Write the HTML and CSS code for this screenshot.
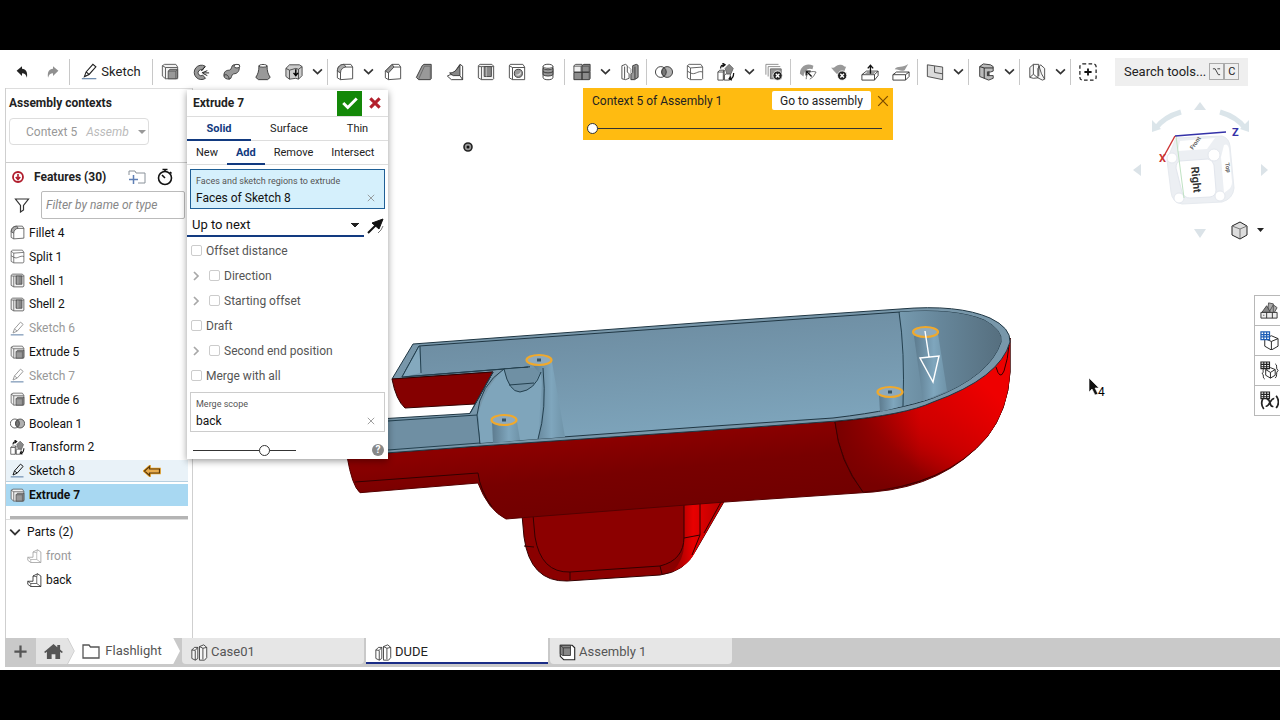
FILE: index.html
```html
<!DOCTYPE html>
<html lang="en">
<head>
<meta charset="utf-8">
<title>DUDE - Flashlight</title>
<link rel="stylesheet" href="styles.css">
</head>
<body>
<svg class="defs" aria-hidden="true">
  <defs>
    <symbol id="i-undo" viewBox="0 0 20 20"><path d="M4 8.500 10 3.500v3c4.500.3 6.500 4 5.500 10-1-3.500-2.500-5-5.500-5v3z" fill="#222"/></symbol>
    <symbol id="i-redo" viewBox="0 0 20 20"><path d="M16 8.500 10 3.500v3c-4.500.3-6.500 4-5.500 10 1-3.500 2.500-5 5.500-5v3z" fill="#909090"/></symbol>
    <symbol id="i-pencil" viewBox="0 0 20 20"><path d="M4 16 6 10.500 14 1.500l3.500 3-8 9zM6 10.500l3.500 3" fill="none" stroke="currentColor" stroke-width="1.300"/><path d="M1 18.500h17" stroke="#4a6f9a" stroke-width="1.200"/></symbol>
    <symbol id="i-extrude" viewBox="0 0 20 20"><path d="M1.500 3 4 1.500h12.500l2 3V17.500H5l-3.500-3z" fill="#f2f2f2" stroke="#555"/><path d="M5 17.500V5h13.500M1.500 3 5 5" fill="none" stroke="#555"/><path d="M8 9l2-2h8.500v9L17 17.500H8z" fill="#999" stroke="#444" stroke-width=".9"/><path d="M8 9h8.500v8.500M16.500 9l2-2" stroke="#555" fill="none" stroke-width=".9"/></symbol>
    <symbol id="i-revolve" viewBox="0 0 20 20"><path d="M14.500 3.500A8 8 0 1 0 15 17l-3-3.500a3.300 3.300 0 1 1-.3-5.500z" fill="#999" stroke="#333"/><path d="M15 4 10 8.500M11 11l6-2.500M12 11h7M12 11.500l5 2.500" stroke="#222" stroke-width="1.100"/></symbol>
    <symbol id="i-sweep" viewBox="0 0 20 20"><path d="M1 14c0-5 3-6 6-6s2-6 5-6h6c1 7-2 10-6 10-3 0-2 6-5 6s-6-1-6-4z" fill="#999" stroke="#333"/><ellipse cx="15.500" cy="3.500" rx="3.200" ry="2" fill="#fff" stroke="#333"/><path d="M1 14c2-2 5-1 6 4" fill="none" stroke="#333"/></symbol>
    <symbol id="i-loft" viewBox="0 0 20 20"><path d="M5.500 3h9c0 6 1 9 3.500 13l-3 2.500H5L2 16c2.500-4 3.500-7 3.500-13z" fill="#999" stroke="#333"/><path d="M5.500 3.500c0-2.500 9-2.500 9 0-1 1.500-8 1.500-9 0z" fill="#fff" stroke="#333"/></symbol>
    <symbol id="i-thicken" viewBox="0 0 20 20"><path d="M1 6l4-4h11l3 2v10l-4 4-3-1-7 1-4-3z" fill="#ccc" stroke="#444"/><path d="M1 6l4 2 7-2 3 1V18M15 7l4-3M5 8v10" stroke="#444" fill="none"/><path d="M12 7v7M9.500 11l2.500 3 2.500-3" stroke="#000" stroke-width="1.600" fill="none"/></symbol>
    <symbol id="i-fillet" viewBox="0 0 20 20"><path d="M1.500 9C1.500 4 5 1.500 9 1.500h7.500l2 3v13l-13.500 1-3.500-2z" fill="#fff" stroke="#444"/><path d="M1.500 9C1.500 4 5 1.500 9 1.500l2 3C8 4.500 5 7 5 11z" fill="#aaa" stroke="#444"/><path d="M11 4.500h7.500M5 11v7.500" stroke="#444"/></symbol>
    <symbol id="i-chamfer" viewBox="0 0 20 20"><path d="M1.500 9 9 1.500h7.500l2 3v13l-13.500 1-3.500-2z" fill="#fff" stroke="#444"/><path d="M1.500 9 9 1.500l2 3L5 11z" fill="#999" stroke="#444"/><path d="M11 4.500h7.500M5 11v7.500" stroke="#444"/></symbol>
    <symbol id="i-draft" viewBox="0 0 20 20"><path d="M1.500 16 8 3l2-1.500h8v16l-1 1H4z" fill="#999" stroke="#333"/><path d="M4 18 10.500 3.500H17V18" fill="none" stroke="#666"/></symbol>
    <symbol id="i-rib" viewBox="0 0 20 20"><path d="M15.500 1.500l3 2v15H6l-4.500-4 3-1.500h3z" fill="#fff" stroke="#333"/><path d="M15.500 2v12H8l-4-3c5 0 8-3 11.500-9z" fill="#888" stroke="#333"/><path d="M15.500 14l3 4.500" stroke="#333"/></symbol>
    <symbol id="i-shell" viewBox="0 0 20 20"><path d="M1.500 3l2-1.500h13l2 2v14l-1 1H5l-3.500-2z" fill="#f2f2f2" stroke="#444"/><path d="M5 18.500V4H2M5 4h13.500" stroke="#555" fill="none"/><path d="M8 4h8v11H8z" fill="#888" stroke="#444"/><path d="M10.500 4.500V15" stroke="#bbb"/></symbol>
    <symbol id="i-hole" viewBox="0 0 20 20"><path d="M1.500 3l1-1.500h14l2 3v14H5l-3.500-2z" fill="#fff" stroke="#444"/><path d="M5 18.500V5h13.500M1.500 3 5 5" stroke="#444" fill="none"/><circle cx="11.500" cy="11.500" r="4.500" fill="#999" stroke="#333"/><path d="M8.500 13c3 0 5-1 6-4 1 4-3 7-6 4z" fill="#ddd"/></symbol>
    <symbol id="i-thread" viewBox="0 0 20 20"><path d="M4.500 4c0-3.500 11-3.500 11 0v12c0 3.500-11 3.500-11 0z" fill="#fff" stroke="#333"/><path d="M4.500 6c2 2 9 2 11 0v7c-2 2-9 2-11 0z" fill="#999" stroke="#333"/><path d="M4.500 4c0 2.500 11 2.500 11 0M4.500 9.500c2 2 9 2 11 0" fill="none" stroke="#333"/></symbol>
    <symbol id="i-pattern" viewBox="0 0 20 20"><path d="M1 3l2-1.500h7V10H1z" fill="#eee" stroke="#444"/><path d="M10 3l2-1.500h7V9l-1 1h-8zM1 10.500h9v8H1zM10 10.500h8l1-1v8l-1 1h-8z" fill="#8c8c8c" stroke="#333"/><path d="M1 3.500h8V10M10 3.500h8V10M18 10.500v8" stroke="#555" fill="none"/></symbol>
    <symbol id="i-mirror" viewBox="0 0 20 20"><path d="M1 3l4-1.500 2 1.500v7l2 2v5l-4 1.500-4-1zM4 4v13.500" fill="#fff" stroke="#444"/><path d="M13 3l4-1.500 2 1V16l-4 2.500h-4v-6l2-2z" fill="#999" stroke="#333"/><path d="M8 4l3 3v5" fill="none" stroke="#888"/><path d="M15.500 4v14" stroke="#333"/></symbol>
    <symbol id="i-boolean" viewBox="0 0 20 20"><circle cx="6.500" cy="10" r="6" fill="#fff" stroke="#333"/><circle cx="13.500" cy="10" r="6" fill="#b0b0b0" stroke="#333"/><path d="M10 5.100a6 6 0 0 1 0 9.800 6 6 0 0 1 0-9.800z" fill="#777" stroke="#333"/></symbol>
    <symbol id="i-split" viewBox="0 0 20 20"><path d="M1.500 3l2-1.500h13l2 3v13l-1 1H5l-3.500-2z" fill="#fff" stroke="#555"/><path d="M1.500 3 5 5.500l13.500-1M5 5.500v13M1.500 9 5 11c5 3 8-3 13.500-1" fill="none" stroke="#555"/></symbol>
    <symbol id="i-transform" viewBox="0 0 20 20"><path d="M1 10l2-2h5v10l-1 1H1zM1 10h6v9M7 10l1-2M8 14l2-2h5l-1 7H8z" fill="#fff" stroke="#444"/><path d="M9 6l4.500-4.500L18 6l-2.500 6H11z" fill="#888" stroke="#666"/><path d="M4 6c0-3 1-4 4-4M6 0l3 2-3 2.500M18.500 11c0 4-1 6-4 7M16.500 19l-3-1.500 2-2.500" fill="none" stroke="#111" stroke-width="1.400"/></symbol>
    <symbol id="i-delpart" viewBox="0 0 20 20"><path d="M1 13V1.500h14M3.500 15V4H17" fill="none" stroke="#888"/><path d="M6 6.500h12v11H6z" fill="#999" stroke="#666"/><circle cx="14" cy="14" r="5.200" fill="#222" stroke="#fff"/><path d="m12 12 4 4m0-4-4 4" stroke="#fff" stroke-width="1.500"/></symbol>
    <symbol id="i-modfillet" viewBox="0 0 20 20"><path d="M1 12C1 4 8-1 16 3l-1 4C10 5 6 8 5 15z" fill="#999"/><path d="M8 18c0-6 4-10 11-8l-3 5-4 3" fill="#fff" stroke="#666"/><path d="M14 15 9 10M8 14V9h5" stroke="#111" stroke-width="1.500" fill="none"/></symbol>
    <symbol id="i-delface" viewBox="0 0 20 20"><path d="M1 5c4 2 6-4 11-3 3 0 4 3 6 2l-4 10C8 15 5 9 1 5z" fill="#999"/><circle cx="13.500" cy="14" r="5.200" fill="#222" stroke="#fff"/><path d="m11.500 12 4 4m0-4-4 4" stroke="#fff" stroke-width="1.500"/></symbol>
    <symbol id="i-moveface" viewBox="0 0 20 20"><path d="M1 13l5-4h13v5l-4 5H1zM1 13h14v6M15 13l4-4" fill="#fff" stroke="#333"/><path d="M4 12.500 8 9h9l-3 3.500z" fill="#999"/><path d="M10.500 12V3M7.500 6l3-3.500 3 3.500" stroke="#111" stroke-width="1.500" fill="none"/></symbol>
    <symbol id="i-replace" viewBox="0 0 20 20"><path d="M1 13l4-3h14v5l-4 4H1zM1 13h14v6M15 13l4-3" fill="#fff" stroke="#333"/><path d="M3 7c3-5 9-1 15-6l-4 7c-4 2-6-1-11-1z" fill="#999"/></symbol>
    <symbol id="i-plane" viewBox="0 0 20 20"><path d="M1.500 2l17 2.500v14L1.500 15z" fill="#dadada" stroke="#444"/><path d="M9.500 3.500v7l9 1.500" fill="none" stroke="#444"/></symbol>
    <symbol id="i-frame" viewBox="0 0 20 20"><path d="M3 4l4-3 8 1 3 2v5l-3 1h-3v4h6v3l-5 2-10-4z" fill="#bbb" stroke="#333"/><path d="M8 5.500h10M8 5.500V17M3 4l5 1.500" stroke="#222" fill="none"/><path d="M11 9.500h3v5h-3z" fill="#444"/></symbol>
    <symbol id="i-sheet" viewBox="0 0 20 20"><path d="M2 5l4-3.500v11L2 16zM6 1.500h6v13M6 12.500l5 4V6l3-4 4.500 4v12L16 19l-5-2.500M12 3l3 9 3.500 6M2 16l4 1 5-.5" fill="#eee" fill-opacity=".6" stroke="#444"/></symbol>
    <symbol id="i-custom" viewBox="0 0 20 20"><rect x="1" y="1" width="18" height="18" rx="3" fill="none" stroke="#222" stroke-width="1.400" stroke-dasharray="4 2.600"/><path d="M10 6v8M6 10h8" stroke="#111" stroke-width="2"/></symbol>
    <symbol id="i-part" viewBox="0 0 20 20"><path d="M1 11h7V4l6-3 4.500 3v14H5l-4-3z" fill="#fff" stroke="currentColor"/><path d="M1 11l4 3h8V5l1-4M8 4l5 1M5 14v4M13 14l5.500 4" fill="none" stroke="currentColor" stroke-width=".8"/></symbol>
    <symbol id="i-studio" viewBox="0 0 20 20"><path d="M1 7l3-3h4v13l-3 2-4-2zM1 7l4 .5L8 4M5 8v11" fill="#fff" fill-opacity=".6" stroke="#333"/><path d="M10 3l5-2 3.500 3v12L16 19h-6zM10 3l4 2v13M14 5l4.500-1" fill="#fff" fill-opacity=".6" stroke="#333"/></symbol>
    <symbol id="i-asm" viewBox="0 0 20 20"><path d="M1.500 1.500h14l3 3v14H5.500l-4-4z" fill="#fff" stroke="#222" stroke-width="1.300"/><path d="M1.500 1.500h12v12H4l-2.500-2z" fill="#888" stroke="#333"/><path d="M5 4.500h8.500M5 4.500v9M2 2l3 2.500" stroke="#333" fill="none"/></symbol>
    <symbol id="i-chev" viewBox="0 0 10 10"><path d="M1 3l4 4 4-4" fill="none" stroke="#333" stroke-width="1.500"/></symbol>
    <symbol id="i-right" viewBox="0 0 10 10"><path d="M3 1l4 4-4 4" fill="none" stroke="#a8a8a8" stroke-width="1.700"/></symbol>
    <symbol id="i-x" viewBox="0 0 10 10"><path d="m1 1 8 8m0-8-8 8" stroke="currentColor" fill="none"/></symbol>
  </defs>
</svg>
<div class="screen">
<div class="app">

<header class="toolbar">
  <button class="tool" aria-label="Undo"><svg><use href="#i-undo"/></svg></button>
  <button class="tool" aria-label="Redo"><svg><use href="#i-redo"/></svg></button>
  <i class="sep"></i>
  <button class="sketch"><svg><use href="#i-pencil"/></svg>Sketch</button>
  <i class="sep"></i>
  <button class="tool" aria-label="Extrude"><svg><use href="#i-extrude"/></svg></button>
  <button class="tool" aria-label="Revolve"><svg><use href="#i-revolve"/></svg></button>
  <button class="tool" aria-label="Sweep"><svg><use href="#i-sweep"/></svg></button>
  <button class="tool" aria-label="Loft"><svg><use href="#i-loft"/></svg></button>
  <button class="tool" aria-label="Thicken"><svg><use href="#i-thicken"/></svg></button>
  <button class="more" aria-label="More solids"><svg><use href="#i-chev"/></svg></button>
  <i class="sep"></i>
  <button class="tool" aria-label="Fillet"><svg><use href="#i-fillet"/></svg></button>
  <button class="more" aria-label="More fillets"><svg><use href="#i-chev"/></svg></button>
  <button class="tool" aria-label="Chamfer"><svg><use href="#i-chamfer"/></svg></button>
  <button class="tool" aria-label="Draft"><svg><use href="#i-draft"/></svg></button>
  <button class="tool" aria-label="Rib"><svg><use href="#i-rib"/></svg></button>
  <button class="tool" aria-label="Shell"><svg><use href="#i-shell"/></svg></button>
  <button class="tool" aria-label="Hole"><svg><use href="#i-hole"/></svg></button>
  <button class="tool" aria-label="Thread"><svg><use href="#i-thread"/></svg></button>
  <i class="sep"></i>
  <button class="tool" aria-label="Pattern"><svg><use href="#i-pattern"/></svg></button>
  <button class="more" aria-label="More patterns"><svg><use href="#i-chev"/></svg></button>
  <button class="tool" aria-label="Mirror"><svg><use href="#i-mirror"/></svg></button>
  <i class="sep"></i>
  <button class="tool" aria-label="Boolean"><svg><use href="#i-boolean"/></svg></button>
  <button class="tool" aria-label="Split"><svg><use href="#i-split"/></svg></button>
  <button class="tool" aria-label="Transform"><svg><use href="#i-transform"/></svg></button>
  <button class="more" aria-label="More transforms"><svg><use href="#i-chev"/></svg></button>
  <button class="tool" aria-label="Delete part"><svg><use href="#i-delpart"/></svg></button>
  <i class="sep"></i>
  <button class="tool" aria-label="Modify fillet"><svg><use href="#i-modfillet"/></svg></button>
  <button class="tool" aria-label="Delete face"><svg><use href="#i-delface"/></svg></button>
  <button class="tool" aria-label="Move face"><svg><use href="#i-moveface"/></svg></button>
  <button class="tool" aria-label="Replace face"><svg><use href="#i-replace"/></svg></button>
  <i class="sep"></i>
  <button class="tool" aria-label="Plane"><svg><use href="#i-plane"/></svg></button>
  <button class="more" aria-label="More planes"><svg><use href="#i-chev"/></svg></button>
  <i class="sep"></i>
  <button class="tool" aria-label="Frame"><svg><use href="#i-frame"/></svg></button>
  <button class="more" aria-label="More frames"><svg><use href="#i-chev"/></svg></button>
  <i class="sep"></i>
  <button class="tool" aria-label="Sheet metal"><svg><use href="#i-sheet"/></svg></button>
  <button class="more" aria-label="More sheet metal"><svg><use href="#i-chev"/></svg></button>
  <i class="sep"></i>
  <button class="tool" aria-label="Add custom feature"><svg><use href="#i-custom"/></svg></button>
  <button class="search">Search tools... <span class="keys"><kbd><svg viewBox="0 0 10 10"><path d="M1 2h2.500L7 8.500h2M6 2h3" fill="none" stroke="#333"/></svg></kbd><kbd>C</kbd></span></button>
</header>

<main class="work">
  <aside class="side">
    <section class="contexts">
      <h2>Assembly contexts</h2>
      <button class="ctx" aria-haspopup="listbox"><span>Context 5</span><em>Assemb</em><i class="caret"></i></button>
    </section>
    <section class="feat">
      <div class="feathead">
        <svg viewBox="0 0 12 12" class="alert"><circle cx="6" cy="6" r="5" fill="#fff" stroke="#b01c2c" stroke-width="1.800"/><path d="M6 3v5M3.800 6 6 8.500 8.200 6" fill="none" stroke="#b01c2c" stroke-width="1.600"/></svg>
        <h2>Features (30)</h2>
        <button class="plain" aria-label="Add folder"><svg class="i18" viewBox="0 0 18 18"><path d="M1 7V3h6l1 2h9v10h-7" fill="none" stroke="#8a929a"/><path d="M5.500 7v9M1 11.500h9" stroke="#5f7fb5" stroke-width="1.500"/></svg></button>
        <button class="plain" aria-label="Regeneration times"><svg class="i18" viewBox="0 0 18 18"><circle cx="9" cy="10" r="6.500" fill="none" stroke="#111" stroke-width="1.600"/><path d="M6.500 1.500h5M9 1.500v2M9 10 6 7M14 4l1.500 1.500" stroke="#111" stroke-width="1.600"/></svg></button>
      </div>
      <div class="filter">
        <svg class="i16" viewBox="0 0 16 16"><path d="M1.500 2h13L9.500 8.500V13L6.500 15V8.500z" fill="none" stroke="#333" stroke-width="1.200"/></svg>
        <input type="text" placeholder="Filter by name or type" aria-label="Filter by name or type">
      </div>
      <ul class="list">
        <li><svg><use href="#i-fillet"/></svg>Fillet 4</li>
        <li><svg><use href="#i-split"/></svg>Split 1</li>
        <li><svg><use href="#i-shell"/></svg>Shell 1</li>
        <li><svg><use href="#i-shell"/></svg>Shell 2</li>
        <li class="dim"><svg><use href="#i-pencil"/></svg>Sketch 6</li>
        <li><svg><use href="#i-extrude"/></svg>Extrude 5</li>
        <li class="dim"><svg><use href="#i-pencil"/></svg>Sketch 7</li>
        <li><svg><use href="#i-extrude"/></svg>Extrude 6</li>
        <li><svg><use href="#i-boolean"/></svg>Boolean 1</li>
        <li><svg><use href="#i-transform"/></svg>Transform 2</li>
        <li class="hover"><svg><use href="#i-pencil"/></svg>Sketch 8<svg class="ref" viewBox="0 0 18 12"><path d="M1.500 6 6.500 1.500V4H16.500v4h-10v2.500z" fill="#f0b04a" stroke="#e9a020" stroke-width="2.600"/><path d="M1.500 6 6.500 1.500V4H16.500v4h-10v2.500z" fill="#e8ad50" stroke="#5c3a0c" stroke-width="1.200"/></svg></li>
        <li class="active"><svg><use href="#i-extrude"/></svg>Extrude 7</li>
      </ul>
      <div class="rollback"></div>
    </section>
    <section class="parts">
      <h3><svg class="i12"><use href="#i-chev"/></svg>Parts (2)</h3>
      <ul>
        <li class="dim"><svg><use href="#i-part"/></svg>front</li>
        <li><svg><use href="#i-part"/></svg>back</li>
      </ul>
    </section>
  </aside>

  <div class="canvas">
    <svg class="scene" viewBox="193 88 1087 550" role="img" aria-label="Boat hull model">
      <defs>
        <linearGradient id="side" gradientUnits="userSpaceOnUse" x1="600" y1="438" x2="607" y2="512"><stop offset="0" stop-color="#8c0000"/><stop offset=".5" stop-color="#780000"/><stop offset="1" stop-color="#720000"/></linearGradient>
        <linearGradient id="bow" gradientUnits="userSpaceOnUse" x1="915" y1="405" x2="900" y2="490"><stop offset="0" stop-color="#cc0000"/><stop offset=".5" stop-color="#a80000"/><stop offset="1" stop-color="#780000"/></linearGradient>
        <linearGradient id="bowr" gradientUnits="userSpaceOnUse" x1="915" y1="470" x2="990" y2="390"><stop offset="0" stop-color="#e00000" stop-opacity="0"/><stop offset=".5" stop-color="#d80000" stop-opacity=".8"/><stop offset="1" stop-color="#ee0000"/></linearGradient>
        <linearGradient id="bowl" gradientUnits="userSpaceOnUse" x1="835" y1="0" x2="920" y2="0"><stop offset="0" stop-color="#780000"/><stop offset="1" stop-color="#780000" stop-opacity="0"/></linearGradient>
        <linearGradient id="cav" gradientUnits="userSpaceOnUse" x1="640" y1="330" x2="650" y2="440"><stop offset="0" stop-color="#6f8fa4"/><stop offset="1" stop-color="#7ea5bc"/></linearGradient>
        <linearGradient id="nose" x1="0" y1="0" x2="1" y2="0"><stop offset="0" stop-color="#7599ae"/><stop offset=".4" stop-color="#66869a"/><stop offset="1" stop-color="#566f7f"/></linearGradient>
        <linearGradient id="post" x1="0" y1="0" x2="1" y2="0"><stop offset="0" stop-color="#5d7b8e"/><stop offset=".6" stop-color="#7fa6bd"/><stop offset="1" stop-color="#6f93a8"/></linearGradient>
        <linearGradient id="keel" x1="0" y1="0" x2="1" y2="0"><stop offset="0" stop-color="#900000"/><stop offset=".4" stop-color="#e80000"/><stop offset="1" stop-color="#b00000"/></linearGradient>
      </defs>
      <g stroke="#300" stroke-width="1" stroke-linejoin="round">
        <path d="M522 515 524 537Q530 582 567 581L660 575Q685 572 696 550L725 500z" fill="#8a0000"/>
        <path d="M684 504 725 500 696 550Q690 565 672 572 684 560 684 545z" fill="url(#keel)" stroke="none"/>
        <path d="M533 515 535 537Q541 573 570 572L660 566Q684 560 684 537V504z" fill="#8c0000"/>
        <path d="M700 503V535L684 538M704 533 721 502M524 546l10 1M570 572v8M660 566l2 8M700 535l-8 20" fill="none"/>
        <path d="M347 456 480 446 700 431 837 421Q905 415 933 402 1000 378 1010 338V372Q1008 410 987 437 945 486 873 492L725 502 522 517.700 506 519Q488 510 478 483L360 492.700Q352 486 347 456z" fill="url(#side)" stroke="#500"/>
        <path d="M835 422Q905 415 933 402 1000 378 1010 338V372Q1008 410 987 437 945 486 863 492 840 460 835 422z" fill="url(#bow)"/>
        <path d="M835 422Q905 415 933 402 1000 378 1010 338V372Q1008 410 987 437 945 486 863 492 840 460 835 422z" fill="url(#bowr)" stroke="none"/>
        <path d="M835 422Q905 415 933 402V480Q900 490 863 492 840 460 835 422z" fill="url(#bowl)" stroke="none"/>
        <path d="M355 482 478 473Q480 490 492 507M996 367q4 14 8 4 4-12 5-26" fill="none"/>
      </g>
      <path d="M413 344 700 322.700 900 309Q958 304 990 318 1011 328 1010 342 1000 378 933 402 905 415 837 421L700 431 480 446 345 456 345 421 470 413.500 493 372 392 379z" fill="#7897aa" stroke="#203744"/>
      <path d="M392 379 493 372 475 404 405 408Q396 400 392 379z" fill="#850000" stroke="#300"/>
      <path d="M419 346 700 326 900 312Q955 308 984 320 1003 330 1001 342 990 376 933 398 900 410 833 418L700 427 480 443 479 415 504 369 530 367 402 377z" fill="url(#cav)" stroke="#203744"/>
      <path d="M900 312Q955 308 984 320 1003 330 1001 342 990 376 933 398L903 406Q905 350 900 312z" fill="url(#nose)"/>
      <path d="M419 346 402 377 421 373z" fill="#84a9be"/>
      <path d="M504 369Q485 387 478 415L480 443 538 439 543 367z" fill="#7fa5bb"/>
      <path d="M504 369 542 367Q534 392 520 392 508 391 504 369z" fill="#6f90a4"/>
      <path d="M531 363 552 362 565 437 538 439Q545 400 541 375z" fill="url(#post)"/>
      <path d="M492 422h25l3 18-27 3z" fill="url(#post)"/>
      <path d="M879 395l24-2v13l-23 6z" fill="url(#post)"/>
      <path d="M914 336 938 334 947 391 923 401z" fill="url(#post)"/>
      <path d="M388 420 477 415 479 443 388 450z" fill="#6f8fa3"/>
      <path d="M419 346 402 377 528 367M420 346l1 27M899 312Q905 350 903 406M504 369Q480 385 477 415L480 444M388 421 477 415M388 450 480 443M504 369Q509 392 520 392 535 390 541 372M509 385l25-2M543 368Q547 410 538 439M493 372 470 413" fill="none" stroke="#23404f"/>
      <path d="M835 422Q839 462 863 492" fill="none" stroke="#3c0000"/>
      <g fill="#8eaabd" stroke="#f0a92c" stroke-width="2.200"><ellipse cx="539" cy="360" rx="12.500" ry="5"/><ellipse cx="504" cy="420" rx="12.500" ry="5"/><ellipse cx="890" cy="392" rx="12.500" ry="5"/><ellipse cx="925.500" cy="332" rx="12.500" ry="5"/></g>
      <path d="M537 360h4M502 420h4M888 392h4" stroke="#36505f" stroke-width="3"/>
      <path d="M925 331l4 26M920 358l19-2-6 26z" fill="none" stroke="#fff" stroke-width="1.400"/>
      <circle cx="468" cy="147" r="4" fill="#999" stroke="#222" stroke-width="1.600"/><circle cx="468" cy="147" r="1.500" fill="#111"/>
      <path d="M1089 378v14l3-3 3 6 3-1-3-6h4z" fill="#111" stroke="#fff" stroke-width=".6"/>
      <text x="1098" y="396" class="count">4</text>
    </svg>

    <svg class="cube" viewBox="1130 96 140 146" role="img" aria-label="View cube">
      <g fill="#dbe3e8"><path d="M1200 102l6 8h-12zM1133 170l8-6v12zM1268 170l-7-6v12zM1200 238l6-9h-12z"/></g>
      <path d="M1181 112Q1164 117 1156 128M1220 112Q1237 117 1245 128" stroke="#dbe5ea" stroke-width="5" fill="none"/>
      <path d="M1152 120v12l9-3zM1249 120v12l-9-3z" fill="#dbe5ea"/>
      <path d="M1176 138 1222 136Q1229 138 1230 146L1234 188Q1233 199 1222 202L1182 204Q1172 202 1171 192L1167 160z" fill="#eceff3" stroke="#e6eaef" stroke-width="1"/>
      <path d="M1180 141 1215 138 1207 149 1178 151z" fill="#fff"/>
      <path d="M1224 145q4-2 5 4l3 33q0 5-4 8l-4 3-3-36z" fill="#fff"/>
      <path d="M1180 161 1208 159Q1213 160 1214 165L1216 190Q1216 196 1210 197L1190 198Q1184 198 1182 192L1176 168Q1176 162 1180 161z" fill="#fff" stroke="#e2e6ed"/>
      <g fill="#fff" stroke="#e4e8ee"><circle cx="1214" cy="155" r="6"/><circle cx="1172" cy="158" r="5"/><circle cx="1220" cy="196" r="5"/><circle cx="1179" cy="198" r="5"/></g>
      <path d="M1176 136l8 62" stroke="#bfe2c3"/><path d="M1175 136l51-4" stroke="#3432a8" stroke-width="1.500"/><path d="M1175 136l-11 20" stroke="#c33" stroke-width="1.400"/>
      <text x="1232" y="136" class="ax z">Z</text><text x="1159" y="162" class="ax x">X</text>
      <text transform="translate(1191 167) rotate(84)" class="face">Right</text>
      <text transform="translate(1193 150) rotate(-55)" class="tiny">Front</text><text transform="translate(1225 163) rotate(80)" class="tiny">Top</text>
      <path d="M1232 226l8-4 7 4v9l-7 4-8-4z" fill="#ddd" stroke="#222"/><path d="M1232 226l8 3v9M1240 229l7-3" stroke="#777" fill="none"/><path d="M1257 228h7l-3.500 4z" fill="#222"/>
    </svg>

    <nav class="dock">
      <button aria-label="Appearance"><svg viewBox="0 0 20 20"><path d="M8 12 9 2l5 1v9M10 11l4-7 4 3-4 7" fill="#aaa" stroke="#555"/><path d="M2 12 7 5l4 7z" fill="#888" stroke="#444"/><path d="M1 12h17v6H1z" fill="#eee" stroke="#333"/><path d="M7 12v6M13 12v6M3.500 15h1" stroke="#333"/></svg></button>
      <button aria-label="Configurations"><svg viewBox="0 0 20 20"><path d="M5 8l7-3 7 3v8l-7 4-7-4zM5 8l7 3 7-3M12 11v9" fill="#fff" stroke="#222"/><path d="M0 0h10v9H0z" fill="#fff"/><path d="M1 1h9v8H1zM4 1v8M7 1v8M1 3.700h9M1 6.300h9" fill="none" stroke="#1d5db5" stroke-width="1.300"/></svg></button>
      <button aria-label="Configured properties"><svg viewBox="0 0 20 20"><path d="M6 9l5-2 5 2v6l-5 3-5-3zM6 9l5 3 5-3M11 12v6M4 8c-2 3 1 4-2 5 3 1 0 5 3 6M16 3c3 1 0 5 3 7-3 2 0 6-3 8" fill="none" stroke="#222"/><path d="M1 1h9v7H1z" fill="#fff"/><path d="M1 1h9v7H1zM4 1v7M7 1v7M1 3.500h9M1 6h9" fill="none" stroke="#222" stroke-width="1.200"/></svg></button>
      <button aria-label="Variables"><svg viewBox="0 0 20 20"><path d="M3 8c-2 4-2 7 1 11M17 5c3 4 3 9 0 13M6 16c4 1 5-9 9-8M7 9c4-2 3 9 7 7" fill="none" stroke="#222" stroke-width="1.800"/><path d="M1 1h9v7H1zM4 1v7M7 1v7M1 3.500h9M1 6h9" fill="none" stroke="#222" stroke-width="1.200"/></svg></button>
    </nav>

    <section class="banner">
      <div class="brow"><span>Context 5 of Assembly 1</span><button class="go">Go to assembly</button><button class="plain" aria-label="Close"><svg class="i12"><use href="#i-x"/></svg></button></div>
      <input type="range" min="0" max="100" value="0" aria-label="Fade context">
    </section>
  </div>

  <form class="dialog">
    <header><h2>Extrude 7</h2>
      <button type="button" class="ok" aria-label="Accept"><svg viewBox="0 0 16 16"><path d="M2 8l4 4 8-8" fill="none" stroke="#fff" stroke-width="2.600"/></svg></button>
      <button type="button" class="no" aria-label="Cancel"><svg viewBox="0 0 12 12"><path d="m2 2 8 8m0-8-8 8" stroke="#b3202c" stroke-width="2.600"/></svg></button></header>
    <div class="tabs kind"><button type="button" class="on">Solid</button><button type="button">Surface</button><button type="button">Thin</button></div>
    <div class="tabs op"><button type="button">New</button><button type="button" class="on">Add</button><button type="button">Remove</button><button type="button">Intersect</button></div>
    <div class="pick sel"><small>Faces and sketch regions to extrude</small><div><span>Faces of Sketch 8</span><button type="button" class="plain" aria-label="Clear faces"><svg class="i8"><use href="#i-x"/></svg></button></div></div>
    <div class="end"><select aria-label="End type"><option>Up to next</option></select><button type="button" class="plain" aria-label="Flip direction"><svg class="i18" viewBox="0 0 18 18"><path d="M1 16 10 7" stroke="#111" stroke-width="2"/><path d="M16 2 5 6l7 6z" fill="#111" stroke="#111"/><path d="M11 16l3-3M14 13l2-4" stroke="#777"/></svg></button></div>
    <div class="opts">
      <label><input type="checkbox">Offset distance</label>
      <label><svg class="i10"><use href="#i-right"/></svg><input type="checkbox">Direction</label>
      <label><svg class="i10"><use href="#i-right"/></svg><input type="checkbox">Starting offset</label>
      <label><input type="checkbox">Draft</label>
      <label><svg class="i10"><use href="#i-right"/></svg><input type="checkbox">Second end position</label>
      <label><input type="checkbox">Merge with all</label>
    </div>
    <div class="pick"><small>Merge scope</small><div><span>back</span><button type="button" class="plain" aria-label="Clear scope"><svg class="i8"><use href="#i-x"/></svg></button></div></div>
    <footer><input type="range" min="0" max="100" value="72" aria-label="Preview opacity"><button type="button" class="help" aria-label="Help">?</button></footer>
  </form>
</main>

<nav class="docs">
  <button class="add" aria-label="New tab"><svg viewBox="0 0 16 16"><path d="M8 1.500v13M1.500 8h13" stroke="#555" stroke-width="2.400"/></svg></button>
  <button class="home" aria-label="Home"><svg viewBox="0 0 20 18"><path d="M0 9.500 10 1l4 3.400V2h3v5l3 2.500-1.300 1L17 9.200V17h-5v-5H8v5H3V9.200L1.300 10.500z" fill="#555"/></svg></button>
  <button class="folder"><svg viewBox="0 0 18 16"><path d="M1 2h6l1.500 2H17v11H1z" fill="none" stroke="#555" stroke-width="1.300"/></svg>Flashlight</button>
  <button class="doc"><svg><use href="#i-studio"/></svg>Case01</button>
  <button class="doc on"><svg><use href="#i-studio"/></svg>DUDE</button>
  <button class="doc"><svg><use href="#i-asm"/></svg>Assembly 1</button>
</nav>
</div>
</div>
</body>
</html>
```

FILE: styles.css
```css
* { box-sizing: border-box; }
body { margin: 0; font: 12px/16px Roboto, "Liberation Sans", sans-serif; color: #222; }
button, input, select { font: inherit; color: inherit; margin: 0; }
button { border: 0; background: none; padding: 0; display: flex; align-items: center; justify-content: center; white-space: nowrap; }
h2, h3, ul { margin: 0; padding: 0; list-style: none; font-size: 12px; }
svg { display: block; flex: none; }
.defs { position: absolute; width: 0; height: 0; }
.i8 { width: 8px; height: 8px; }
.i10 { width: 10px; height: 10px; }
.i12 { width: 12px; height: 12px; }
.i16 { width: 16px; height: 16px; }
.i18 { width: 18px; height: 18px; }

.screen { min-height: 100vh; background: #000; padding: 50px 0; display: flex; }
.app { flex: 1; min-width: 0; background: #fff; display: flex; flex-direction: column; padding: 0 0 3px 5px; }

.toolbar { height: 38px; display: flex; align-items: center; padding: 5px 0 0 1px; font-size: 13px; }
.toolbar .tool { width: 31px; height: 28px; }
.tool svg { width: 18px; height: 18px; }
.more { width: 17px; height: 28px; }
.more svg { width: 11px; height: 11px; }
.sep { width: 1px; height: 26px; background: #c8c8c8; margin: 0 1px; }
.sketch { width: 80px; gap: 3px; }
.sketch svg { width: 17px; height: 17px; }
.search { margin-left: 12px; height: 28px; background: #efefef; padding: 0 9px; gap: 3px; }
.keys { display: flex; }
.keys kbd { width: 15px; height: 17px; border: 1px solid #aaa; font: 11px/15px Roboto, sans-serif; display: grid; place-items: center; }
.keys svg { width: 9px; height: 9px; }

.work { flex: 1; display: flex; position: relative; min-height: 0; }
.side { width: 188px; border: solid #cfcfcf; border-width: 0 1px; display: flex; flex-direction: column; }
.contexts { height: 75px; border-top: 1px solid #ddd; border-bottom: 1px solid #ccc; padding: 6px 3px; }
.ctx { margin-top: 7px; width: 140px; height: 27px; border: 1px solid #ddd; border-radius: 4px; color: #999; gap: 9px; justify-content: flex-start; padding: 0 6px 0 16px; }
.ctx em { color: #bbb; flex: 1; text-align: left; }
.caret { border: 4px solid transparent; border-top-color: #999; border-bottom: 0; }
.feathead { height: 28px; display: flex; align-items: center; padding: 0 18px 0 6px; gap: 10px; }
.feathead h2 { flex: 1; }
.alert { width: 12px; height: 12px; }
.filter { display: flex; align-items: center; gap: 11px; padding-left: 8px; }
.filter input { flex: 1; min-width: 0; height: 28px; margin-right: 7px; border: 1px solid #bbb; border-radius: 2px; padding: 0 4px; background: #fff; }
.filter input::placeholder { color: #888; font-style: italic; }
.list { height: 286px; margin-top: 1px; display: grid; grid-auto-rows: 1fr; align-items: end; margin-right: 4px; }
.list li { height: 22px; display: flex; align-items: center; gap: 4px; padding-left: 4px; }
.list svg, .parts li svg { width: 15px; height: 15px; }
.list .dim, .parts .dim { color: #999; }
.list .hover { background: #e9f2f8; border-bottom: 1px solid #b5cfe0; }
.list .ref { width: 18px; height: 12px; margin-left: auto; margin-right: 27px; }
.list .active { background: #a8d8f2; font-weight: bold; }
.rollback { margin: 10px 4px 0; height: 3px; background: #b4b4b4; }
.parts { border-top: 1px solid #ddd; margin-right: 4px; }
.parts h3 { font-weight: normal; display: flex; align-items: center; height: 24px; padding-left: 3px; gap: 6px; }
.parts li { height: 24px; display: flex; align-items: center; gap: 4px; padding-left: 21px; }
.list, .parts { color: #111; }

.canvas { flex: 1; position: relative; min-width: 0; overflow: hidden; }
.scene { position: absolute; inset: 0; width: 100%; height: 100%; }
.count { font: 12px Roboto, sans-serif; }
.cube { position: absolute; right: 10px; top: 8px; width: 140px; height: 146px; }
.ax { font: bold 11px Roboto, sans-serif; }
.ax.z { fill: #3432a8; }
.ax.x { fill: #c33; }
.face { font: bold 11px Roboto, sans-serif; fill: #333; }
.tiny { font: bold 6px Roboto, sans-serif; fill: #666; }
.dock { position: absolute; right: 0; top: 207px; width: 26px; background: #fff; border: solid #b8b8b8; border-width: 1px 0 0 1px; }
.dock button { width: 100%; height: 30px; border-bottom: 1px solid #b8b8b8; padding-left: 4px; }
.dock svg { width: 19px; height: 19px; }

.banner { position: absolute; left: 390px; top: 0; width: 310px; height: 52px; background: #ffbb11; padding: 3px 4px 0 9px; }
.brow { display: flex; align-items: center; height: 19px; }
.brow span { flex: 1; }
.go { background: #fff; width: 99px; height: 19px; border-radius: 2px; margin-right: 6px; }
.banner .plain { color: #7a4a00; width: 12px; height: 12px; }
.banner input { width: 295px; margin: 12px 0 0 -5px; }

input[type=range] { appearance: none; height: 12px; background: linear-gradient(#333, #333) center / 100% 1px no-repeat; display: block; }
input[type=range]::-webkit-slider-thumb { appearance: none; width: 11px; height: 11px; border: 1px solid #333; border-radius: 50%; background: #fff; }

.dialog { position: absolute; left: 182px; top: 2px; width: 201px; background: #fff; box-shadow: 0 2px 7px rgba(0,0,0,.4); }
.dialog header { display: flex; align-items: center; height: 27px; padding-left: 6px; border-bottom: 1px solid #ddd; }
.dialog header h2 { flex: 1; }
.ok { width: 25px; height: 25px; background: #138808; }
.ok svg { width: 18px; height: 18px; }
.no { width: 26px; height: 25px; }
.no svg { width: 14px; height: 14px; }
.tabs { display: flex; height: 24px; border-bottom: 1px solid #ddd; font-size: 11px; }
.tabs button { height: 24px; border-bottom: 2px solid transparent; padding-top: 2px; }
.tabs .on { color: #123a80; font-weight: bold; border-color: #123a80; }
.kind button { width: 64px; }
.kind button + button { width: 76px; }
.kind button:last-child { flex: 1; width: auto; }
.op button { padding: 2px 9px 0; }
.pick { margin: 4px 3px 0; height: 40px; border: 1px solid #ccc; padding: 4px 9px 0 5px; }
.pick small { display: block; font-size: 9px; line-height: 14px; color: #555; }
.pick div { display: flex; justify-content: space-between; align-items: center; height: 20px; color: #111; }
.pick .plain { color: #888; }
.pick.sel { background: #d5f0fc; border: 1px solid #1f5f96; }
.end { display: flex; align-items: center; margin-top: 5px; gap: 3px; }
.end select { width: 177px; height: 23px; border: 0; border-bottom: 2px solid #123a80; border-radius: 0; padding: 0 5px; appearance: none; color: #111; font-size: 13px; background: conic-gradient(from 315deg at 50% 100%, #222 90deg, transparent 0) 164px 9px / 8px 4px no-repeat; }
.opts { padding: 1px 0 0 4px; color: #555; }
.opts label { display: flex; align-items: center; height: 25px; gap: 4px; }
.opts .i10 { margin-right: 4px; }
.opts input { appearance: none; width: 11px; height: 11px; border: 1px solid #ccc; border-radius: 2px; background: #fff; }
.dialog footer { display: flex; justify-content: space-between; align-items: center; height: 27px; padding: 9px 4px 0 6px; }
.dialog footer input { width: 103px; }
.help { width: 12px; height: 12px; border-radius: 50%; background: #888; color: #fff; font: bold 10px/12px Roboto, sans-serif; }

.docs { height: 29px; background: #c9c9c9; display: flex; color: #555; font-size: 13px; }
.docs button { height: 26px; }
.add { width: 31px; }
.add svg { width: 15px; height: 15px; }
.home { width: 38px; background: #e4e4e4; clip-path: polygon(0 0, 82% 0, 100% 50%, 82% 100%, 0 100%); padding-right: 4px; }
.home svg { width: 19px; height: 17px; }
.docs .folder { width: 112px; margin-left: -6px; gap: 5px; background: #fff; clip-path: polygon(0 0, 94% 0, 100% 50%, 94% 100%, 0 100%, 6% 50%); padding-right: 4px; }
.folder svg { width: 18px; height: 16px; }
.doc { width: 182px; margin-left: 2px; background: #e6e6e6; border-radius: 0 0 4px 4px; justify-content: flex-start; padding: 2px 0 0 9px; gap: 3px; }
.doc svg { width: 17px; height: 17px; }
.doc.on { background: #fff; color: #222; border-bottom: 2px solid #1a2c86; border-radius: 0; padding-top: 4px; }
```
